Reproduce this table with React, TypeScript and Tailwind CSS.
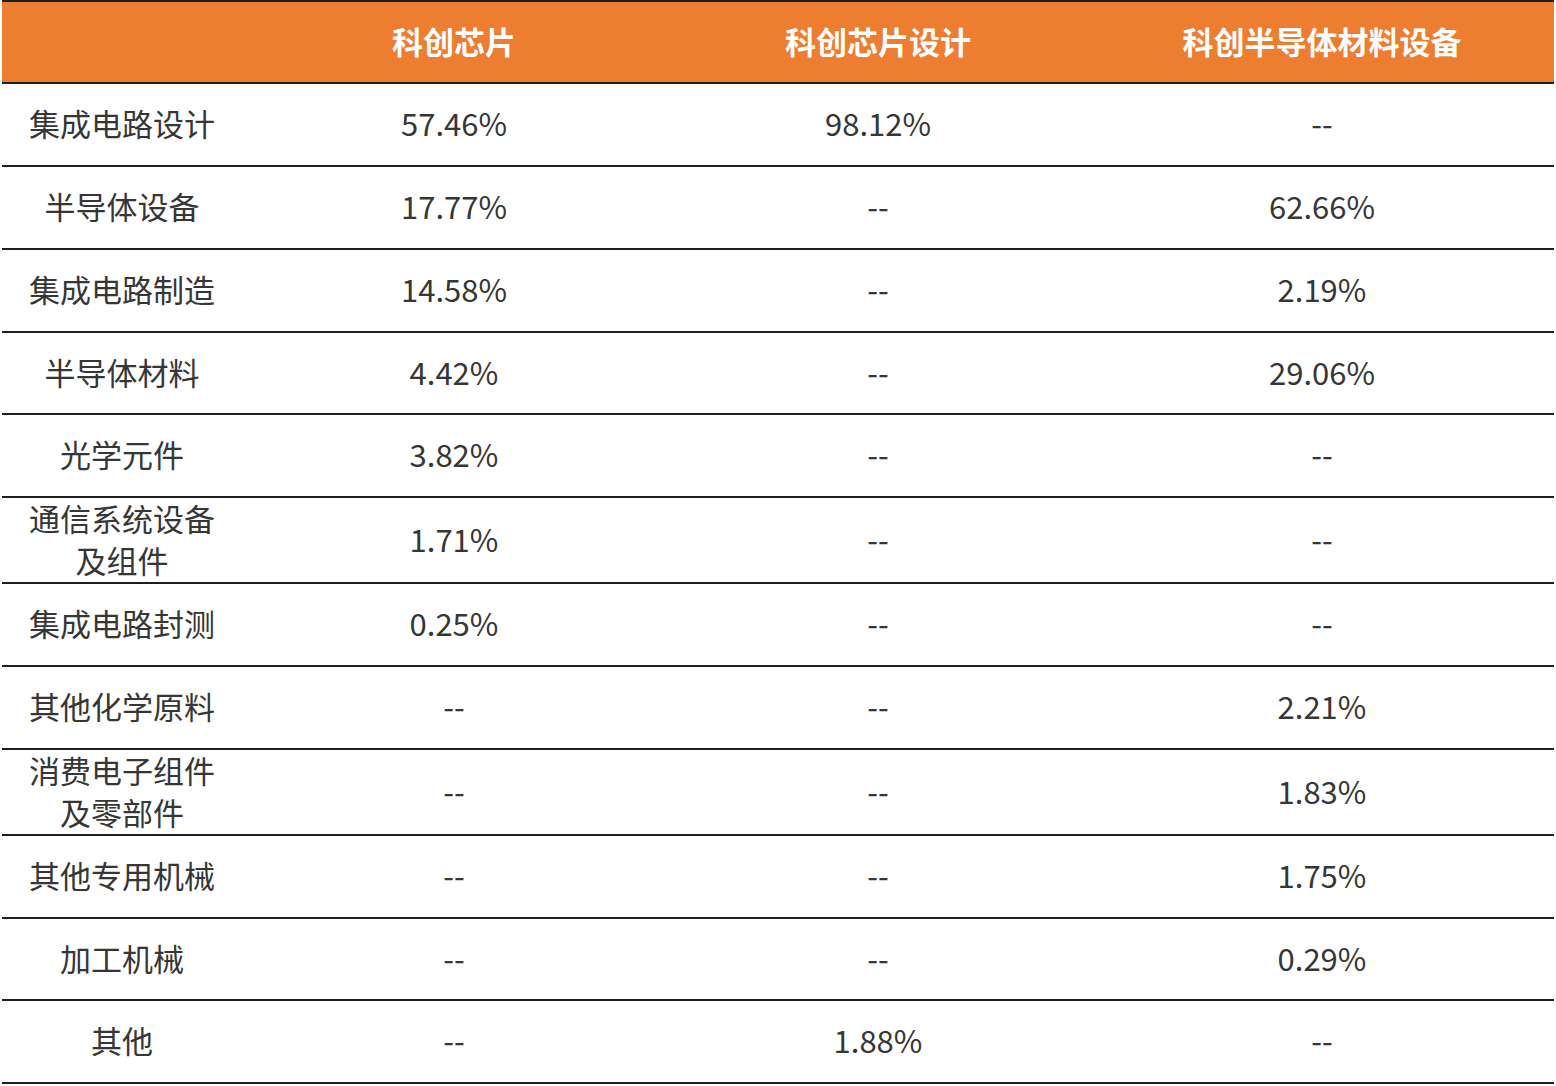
const HEADERS = ['', '科创芯片', '科创芯片设计', '科创半导体材料设备'];

const ROWS: { h: string; cells: string[] }[] = [
  { h: 'h-[83px]', cells: ['集成电路设计', '57.46%', '98.12%', '--'] },
  { h: 'h-[83px]', cells: ['半导体设备', '17.77%', '--', '62.66%'] },
  { h: 'h-[83px]', cells: ['集成电路制造', '14.58%', '--', '2.19%'] },
  { h: 'h-[82px]', cells: ['半导体材料', '4.42%', '--', '29.06%'] },
  { h: 'h-[83px]', cells: ['光学元件', '3.82%', '--', '--'] },
  { h: 'h-[86px]', cells: ['通信系统设备\n及组件', '1.71%', '--', '--'] },
  { h: 'h-[83px]', cells: ['集成电路封测', '0.25%', '--', '--'] },
  { h: 'h-[83px]', cells: ['其他化学原料', '--', '--', '2.21%'] },
  { h: 'h-[86px]', cells: ['消费电子组件\n及零部件', '--', '--', '1.83%'] },
  { h: 'h-[83px]', cells: ['其他专用机械', '--', '--', '1.75%'] },
  { h: 'h-[82px]', cells: ['加工机械', '--', '--', '0.29%'] },
  { h: 'h-[83px]', cells: ['其他', '--', '1.88%', '--'] },
];

const COLS = ['w-[240px]', 'w-[424px]', 'w-[424px]', 'flex-1'];

export default function App() {
  return (
    <div
      className="w-[1556px] h-[1086px] bg-white pl-[2px] pr-[2px]"
      style={{ fontFamily: '"Noto Sans CJK SC", "Noto Sans", sans-serif' }}
    >
      {/* Header */}
      <div className="flex border-t-2 border-b-2 border-[#1e1e1e] bg-[#ed7d31] h-[84px]">
        {HEADERS.map((h, i) => (
          <div
            key={i}
            className={`${COLS[i]} flex items-center justify-center text-white font-bold text-[31px] pb-[2px]`}
          >
            {h}
          </div>
        ))}
      </div>

      {ROWS.map((row, r) => (
        <div key={r} className={`flex border-b-2 border-[#1e1e1e] ${row.h}`}>
          {row.cells.map((cell, c) => (
            <div
              key={c}
              className={`${COLS[c]} flex items-center justify-center text-center text-[31px] leading-[42px] text-[#363636] whitespace-pre-line pb-[3px]`}
            >
              {cell}
            </div>
          ))}
        </div>
      ))}
    </div>
  );
}
